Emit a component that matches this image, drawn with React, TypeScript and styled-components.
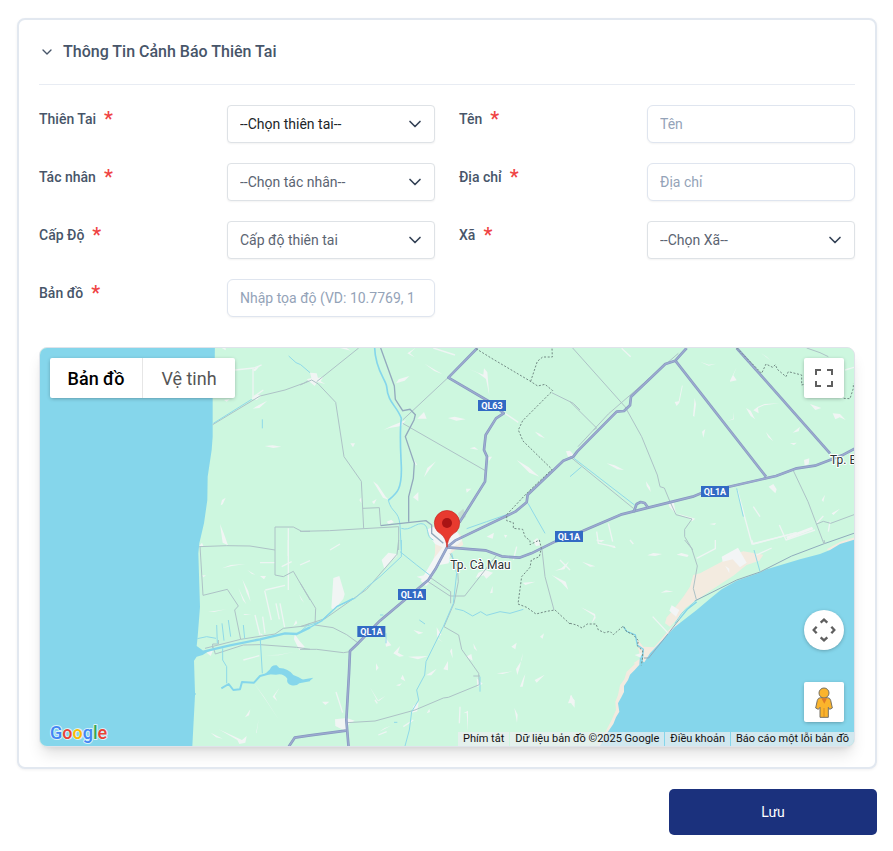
import React, { useState } from "react";
import styled, { createGlobalStyle } from "styled-components";
import { ChevronDown } from "lucide-react";

const GlobalStyle = createGlobalStyle`
  *, *::before, *::after { box-sizing: border-box; }
  body {
    margin: 0;
    background: #ffffff;
    color: #475569;
    font-family: Roboto, "Liberation Sans", sans-serif;
    font-size: 14px;
    line-height: 20px;
  }
  button, input, select { font: inherit; }
`;

const Page = styled.form`
  display: flex;
  flex-direction: column;
  gap: 20px;
  padding: 18px 16px 16px 17px;
`;

const Card = styled.section`
  padding: 0 20px 20px;
  border: 2px solid #e2e8f0;
  border-radius: 8px;
  background: #ffffff;
  box-shadow: 0 1px 3px rgba(15, 23, 42, 0.06);
`;

const CardHeader = styled.button`
  display: flex;
  align-items: center;
  gap: 8px;
  width: 100%;
  height: 65px;
  padding: 0;
  border: 0;
  border-bottom: 1px solid #e8ecf3;
  background: none;
  color: #475569;
  font-size: 16px;
  font-weight: 500;
  text-align: left;
  cursor: pointer;
`;

const Fields = styled.div`
  display: grid;
  grid-template-columns: 1fr 1fr;
  gap: 20px 24px;
  margin: 20px 0 30px;
`;

const Field = styled.div`
  display: grid;
  grid-template-columns: 47fr 52fr;
  align-items: start;
`;

const Label = styled.label`
  display: flex;
  align-items: center;
  gap: 8px;
  height: 28px;
  font-weight: 500;
`;

const Required = styled.span`
  color: #ef4444;
  font-size: 20px;
`;

const Input = styled.input`
  width: 100%;
  min-width: 0;
  height: 38px;
  padding: 0 20px 0 12px;
  border: 1px solid #dfe5ef;
  border-radius: 6px;
  background: #ffffff;
  color: #1e293b;
  box-shadow: 0 1px 2px rgba(0, 0, 0, 0.05);
  &::placeholder { color: #94a3b8; opacity: 1; }
`;

const SelectBox = styled.div`
  position: relative;
  min-width: 0;
  svg {
    position: absolute;
    top: 9px;
    right: 10px;
    color: #334155;
    pointer-events: none;
  }
`;

const Select = styled.select<{ $active?: boolean }>`
  appearance: none;
  width: 100%;
  height: 38px;
  padding: 0 36px 0 12px;
  border: 1px solid #dee2e6;
  border-radius: 4px;
  background: #ffffff;
  color: ${(p) => (p.$active ? "#212529" : "#5b6472")};
  box-shadow: 0 1px 2px rgba(0, 0, 0, 0.05);
`;

const MapFrame = styled.div`
  position: relative;
  height: 400px;
  overflow: hidden;
  border: 1px solid #dfe3ea;
  border-radius: 8px;
  background: #cdf7df;
  box-shadow: 0 10px 15px -3px rgba(0, 0, 0, 0.12), 0 4px 6px -4px rgba(0, 0, 0, 0.12);
`;

const MapDrawing = styled.svg`
  display: block;
  width: 100%;
  height: 100%;
  font-family: Roboto, sans-serif;
`;

const MapTypes = styled.div`
  position: absolute;
  top: 10px;
  left: 10px;
  display: flex;
  border-radius: 2px;
  background: #ffffff;
  box-shadow: 0 1px 4px -1px rgba(0, 0, 0, 0.4);
`;

const MapType = styled.button<{ $active?: boolean }>`
  height: 40px;
  min-width: ${(p) => (p.$active ? "92px" : "93px")};
  padding: 1px 16px 0;
  border: 0;
  border-left: ${(p) => (p.$active ? "0" : "1px solid #e6e6e6")};
  background: none;
  color: ${(p) => (p.$active ? "#000000" : "#565656")};
  font-size: 18px;
  font-weight: ${(p) => (p.$active ? 500 : 400)};
`;

const MapTop = styled.div`
  position: absolute;
  top: 10px;
  right: 10px;
`;

const MapTools = styled.div`
  position: absolute;
  right: 10px;
  bottom: 24px;
  display: flex;
  flex-direction: column;
  gap: 32px;
`;

const MapButton = styled.button<{ $round?: boolean }>`
  display: grid;
  place-items: center;
  width: 40px;
  height: 40px;
  padding: 0;
  border: 0;
  border-radius: ${(p) => (p.$round ? "50%" : "2px")};
  background: #ffffff;
  box-shadow: 0 1px 4px -1px rgba(0, 0, 0, 0.4);
`;

const LogoLink = styled.a`
  position: absolute;
  left: 8px;
  bottom: 0;
  height: 26px;
  svg { display: block; }
`;

const Attribution = styled.div`
  position: absolute;
  right: 0;
  bottom: 0;
  display: flex;
  gap: 1px;
  color: #111111;
  font-size: 11px;
  line-height: 14px;
`;

const Credit = styled.span`
  padding: 0 5px;
  background: rgba(235, 238, 240, 0.75);
  a, button {
    padding: 0;
    border: 0;
    background: none;
    color: inherit;
    text-decoration: none;
    line-height: 14px;
  }
`;

const Actions = styled.div`
  display: flex;
  justify-content: flex-end;
`;

const SaveButton = styled.button`
  min-width: 208px;
  height: 46px;
  border: 0;
  border-radius: 5px;
  background: #1b317d;
  color: #ffffff;
`;

type FieldSpec = {
  id: string;
  label: string;
  kind: "select" | "input";
  text: string;
  active?: boolean;
};

const fields: FieldSpec[] = [
  { id: "disaster", label: "Thiên Tai", kind: "select", text: "--Chọn thiên tai--", active: true },
  { id: "name", label: "Tên", kind: "input", text: "Tên" },
  { id: "agent", label: "Tác nhân", kind: "select", text: "--Chọn tác nhân--" },
  { id: "address", label: "Địa chỉ", kind: "input", text: "Địa chỉ" },
  { id: "level", label: "Cấp Độ", kind: "select", text: "Cấp độ thiên tai" },
  { id: "commune", label: "Xã", kind: "select", text: "--Chọn Xã--" },
  { id: "coords", label: "Bản đồ", kind: "input", text: "Nhập tọa độ (VD: 10.7769, 106.7009)" },
];

type Tile = {
  x: number;
  y: number;
  patches: string;
  streaks: string;
  minor: string;
  water: string;
  border?: string;
};

const tiles: Tile[] = [
  {
    x: 0,
    y: 0,
    patches:
      "M664 176l12-12 20 2-16 14zM572 496l4-16 11-7-9 20zM570 552l12 30 12 34-16-8zM704 318l24-2 26 4-24 4zM668 206l20-12 24-12-24 22zM508 618l8-10 4 10zM582 180l18-3-10 8zM668 90l27-18-20 22zM575 24h12v7z",
    streaks: "M615 90L672 84L695 75M669 85V178M775 565V750M672 170L700 150",
    minor: "M548 254L690 168L765 150L820 130L840 120M508 620L590 617L660 618L735 630V561H790L815 574H840",
    water: "M550 250L665 178M776 48L798 68L812 74L840 98M697 238V265",
  },
  {
    x: 810,
    y: 0,
    patches:
      "M20 118l14-4-4-16 20 2 4 14 16-4-8 14 14 8-24-6-8 12zM288 130l8-12 32-10-14 14zM352 236l20-20 8 20zM444 234l20-4 33 8-28 4zM250 270l24-12 44-18-14 18-36 6zM372 412l10-28 26-20-18 22zM151 310h14l-6 12zM219 424l14 10 24 36 10 10-18-7zM339 472l16-16v28zM216 485l14-8-8 16zM498 446h16l-14 12zM509 325l15-4 11 9zM560 350h16l-8 12zM552 85l10 12 6 70-10-50-24-18-28-12 44 17zM374 71l28 17 26 15-25-10zM650 360l36 22 32 28-30-12zM798 334l12-2 12 14-18 4zM705 275l14 6 16 14-18-7zM260 545l14-6 8 8-16 5zM560 590l22-12-4 18zM612 584l10 2-6 8zM120 24h20l12 8zM322 40l24-16-16 16 14 12zM178 480l6-8v18zM700 602l12-8 10 22-14 2z",
    streaks: "M615 220L655 247M60 0L130 15M400 24L465 45M90 630L120 612M340 360L350 375M484 600L470 615",
    minor:
      "M0 135L35 120L55 132L107 187L132 350L184 424L191 566M50 125L176 24M308 240L445 112M308 250L556 392M188 505L238 503L242 557M0 574L88 572L190 566L296 560V630M755 158L820 190L840 210M705 24V0",
    water:
      "M265 481C275 520 296 510 300 555L304 630M304 565C330 575 350 545 370 552C390 560 375 590 400 600M500 566L560 545L625 522M684 490L735 580",
    border:
      "M528 26L575 55L690 123L713 138L735 133L758 152L668 242L655 270L669 303L756 388L682 458L620 524V542L640 548V565L668 568L675 590L690 602L690 614L718 600M692 124L712 64L728 51H757L756 24",
  },
  {
    x: 1620,
    y: 0,
    patches:
      "M314 186l12-2 10-48 2 2-10 50-8 10zM374 174l4 18-5 38-4-2zM480 122l20-40-10 24 10 15-20 4zM574 40l16 10 12 12zM528 204l14 8 10 20 4 6-14-10zM566 220l-16-9 14-11 20-8 44-2-46 6-18 8zM668 278l22-18-4 14zM396 275l10-8-6 26zM720 192l34 12-18 6zM788 220l22 2 17 18-18-8-13 6zM588 276l10 12 12 16-15-12zM702 360l16-5-2 18-12 4zM596 440l14-8 10 16-4 12zM110 370l24 6 28 14-20-2zM228 424l12 18 2 14-12-18zM296 488l14-8 8 42-20-22zM318 520l58 16-10 8-8-8zM418 552l20-3-4 6zM648 590l78-30 4 8-78 30-18-36zM755 480l10-16-5 22zM470 244l20-8 2-20 0 22zM390 65l26 9 22-3-22 6zM660 310l20-2-8 7zM785 520l25-14-20 19z",
    streaks:
      "M502 450L546 612L680 578M80 575L85 610L135 620M115 550L128 605M628 555L648 600L735 570M550 500L570 530M155 25L182 50M825 90L852 82M740 550L760 528M780 545L775 575",
    minor:
      "M8 24L165 200L215 290L262 405L270 440L283 444L300 485L318 524L366 537L344 568V590L368 630M0 350L190 505M670 392L714 485L762 612M740 552L760 544L782 550L852 524M710 24L750 38L775 50M0 185L80 264L70 270M24 320L115 222L325 40",
    water: "M0 410L35 380M500 445L520 530M12 355L200 500",
    border:
      "M500 24L575 100L588 72L608 82L616 74L622 88L648 110L655 95L695 105V135L720 128L745 115L780 130L820 175L840 176L850 145V130",
  },
  {
    x: 0,
    y: 600,
    patches:
      "M576 85l26-10 44-3-40 6zM652 90l24 14-10-2zM690 108h18l-6 10zM516 106h12l-8 6zM625 143l24 50-10-12zM637 118l18 36 7 31-12-26zM808 164l14 24-9-10zM640 222h24l-20 3zM692 280l14 10-14-4zM794 282l14 20 16 18-16 10-16-32zM798 240l4 10-12 8zM728 470l20-26-14 24 8 16zM645 532l16-24-4 18zM566 568l70 32 14-12-4 20-18 4-6-12zM542 578l36 18-20-4zM678 580l8-42-6 40zM706 346l40-2 44-8-44 10zM530 338l20-8-8 18zM534 216l54-8-36 8zM672 430l30 40 45 70-40-60z",
    streaks: "M704 152L724 240M706 150L765 136M640 360L688 347M750 190L764 262M738 190L748 238M675 225L690 285M698 230L705 280M775 0V48M690 68H735M755 80L785 65M810 75L840 62",
    minor:
      "M510 18L519 166L592 148L625 198L614 210L632 298M735 30V105L760 110L790 94L840 180M525 325L632 298L735 282L760 265L825 258L840 250M550 322L556 342L640 315L690 314L800 322L840 328M548 325V312H565V300",
    water:
      "M560 255L562 310M576 250L582 302M595 240L602 290M502 296L530 290L558 295M578 325V360L590 380V430M640 255L644 295M691 300L697 400",
  },
  {
    x: 810,
    y: 600,
    patches:
      "M245 60l20-22 24 4 2 6-24 22-14 16zM100 114l18-6 16 54-4 14-28 34-8-6zM254 290l20 26-16 4zM340 270l30 8-14 5zM410 262l14 22-14 8 18 14-16-10zM280 340l20-22-6 20 18 10-14 2zM324 350l60-2-30 10zM228 370l8 14-8 8zM308 404l8 20-14-8zM378 406l32-20-16 20zM430 388l14-25v28zM456 325l2 30-8-22zM210 442l22 40 24-14-20 16zM288 436l18-6-8 8zM66 485h22l-12 10zM105 538l35-4 24 8-18 10-8 22-32-16zM340 498l16-12-4 28-16 4zM380 520l8-14 2 10zM530 415l18 16-16 10zM590 400l48-6-30 8zM652 405l-4-18 18-28 2-20-8 40zM660 440l10-26 6-12-8 38zM704 420l30-16-24 24zM720 290l12-10-4 16zM634 320l16-12-4 20zM804 490l10-26 10 24zM643 504l10 20-2 24zM490 520l14-8v64l-4-58zM498 350l16-8 4 20zM668 128l38-3-30 10zM765 92l20-8 22-20-14 24zM755 105l42 20 8 25-20-22zM520 310l12 24-10-9zM570 160l8-22 0 20zM238 575l35-18-20 8zM350 110l32-6-8 16zM535 98l20-8 24 8-20 18-8-10-24 8z",
    streaks: "M108 456L128 518M480 500L478 550M310 560L340 540M225 480L232 490M650 20L640 60M260 575L235 585M780 60L810 90",
    minor:
      "M296 0L291 43L200 148L75 236L0 260M0 128L47 205L45 255L99 263L140 284L176 310M0 328H50L130 338L150 335M390 112L452 155V190M380 122L450 168H494L588 48M450 40L472 80L475 125L462 190L432 260L476 285L485 328L536 400L538 434L445 472L430 474L345 510L225 543L142 548M725 20L735 110L762 210M520 408H540",
    water:
      "M304 0L304 50L240 110L200 142L165 175L110 200L60 245L20 258L0 276M300 35L350 75L395 110M455 40L470 100L460 190L430 260L378 365L374 405L350 450L356 480L335 515L328 570L315 618M465 206L490 212L518 228L542 215L560 226L600 215L630 220L670 208M358 240L375 252M240 225H250M258 280V310M282 547H292M540 410V455",
    border:
      "M718 0L724 25L718 50L694 60L690 82L665 110L654 192L680 202L708 222L740 214L765 210L810 252",
  },
  {
    x: 1620,
    y: 600,
    patches:
      "M232 46l18-7 26 3-20 6zM320 44l14-5 22 6-4 6zM272 158l16-7 22 4-20 2zM0 465l14 16 0 22-10-12zM33 202l42 20 2 12-12 16 8-22zM36 65l40 14-16 1zM115 18l24 4-6 2zM0 98l14 18zM86 0h18l-10 6zM194 345l20-6-2 14z",
    streaks: "M248 230L295 280M380 55L436 26V0M545 0L550 12L680 -22M80 0L95 5M180 0L190 12M560 45L605 24",
    minor: "M344 0L365 25L382 78L370 145L380 182M762 0L765 12",
    water: "M380 180L335 220L315 250M552 30L570 95",
    border:
      "M0 250L20 255L36 264L52 252H78L85 270L104 278L120 274L130 284L160 258L170 275L190 284L205 302L202 318L218 332V352L214 376",
  },
];

const highways = [
  "M1342 24L1255 113L1380 186L1421 220L1398 235L1367 285L1362 330L1371 350L1365 425L1288 548",
  "M1251 622L1275 602L1456 515L1490 487L1493 464L1600 362L1630 350L1642 334L1760 215L1782 213L1800 196L1803 170L1906 72L1936 62L1970 24",
  "M1251 622L1366 631L1415 649L1468 653L1504 640L1575 605L1658 573L1772 524L1858 502L1988 470L2015 459L2238 408L2300 385L2355 377L2400 360L2436 346L2474 326",
  "M1936 62L2208 410",
  "M2120 24L2400 340",
  "M1251 622L1216 688L1195 720L1050 842L982 912L960 933L957 1000L949 1140L956 1224",
  "M775 1222L794 1193L840 1186L948 1172",
  "M1811 516L1820 492L1832 486L1844 489L1855 504",
];

const shields = [
  { x: 1344, y: 180, text: "QL63" },
  { x: 2013, y: 438, text: "QL1A" },
  { x: 1575, y: 573, text: "QL1A" },
  { x: 1104, y: 747, text: "QL1A" },
  { x: 982, y: 858, text: "QL1A" },
];

function MapCanvas() {
  return (
    <MapDrawing viewBox="30 24 2442 1194" preserveAspectRatio="xMidYMid slice" role="img" aria-label="Bản đồ Cà Mau">
      <rect x="-1000" y="-1000" width="5000" height="4000" fill="#cdf7df" />
      <path
        fill="#85d6eb"
        d="M-1000 -100H556L554 80L548 150V290L545 330L533 410L532 480L522 550L508 610L505 640L510 800L503 890L500 918L522 934L545 928L518 945L500 950L492 962L495 1058L498 1062L495 1066L487 1218V1400H-1000Z"
      />
      <g transform="translate(1710 570)">
        <path
          fill="#f3ebe0"
          d="M280 135L300 130L365 95L385 78L430 64L490 74L478 92L440 105L400 137L365 160L300 203L285 213L255 235L235 265L210 290L195 280L200 262L215 245L250 200L270 170Z"
        />
        <path fill="#f3ebe0" d="M105 318L130 350L162 352L210 296L240 272V300L140 410L100 400L122 385Z" />
        <path fill="#f3ebe0" d="M770 20L720 36L680 58L700 70L770 40Z" />
        <path fill="#f3ebe0" d="M124 392L104 403L80 425L73 448L60 466L54 495L46 515L48 540L36 568L18 602L-10 650L-90 830H0L150 450Z" />
        <path
          fill="#85d6eb"
          d="M770 27L720 42L690 60L660 72L600 88L500 118L478 128L410 152L365 178L330 206L290 240L225 290L150 370L133 397L125 393L126 375L120 378L118 404L104 420L90 434L84 450L72 468V486L64 502L54 520L58 545L48 562L40 582L24 605L0 648L-90 830H1300V-20Z"
        />
        <path fill="#f3f5f6" d="M365 80L414 53L440 98L420 112L398 88L368 95ZM208 242L215 226L238 240L228 260ZM376 108L388 116V130Z" />
        <path fill="none" stroke="#8fabbc" strokeWidth="3" d="M132 384H146L210 304L240 265M284 213L410 150L480 126L575 78L670 42L770 7" />
        <path fill="none" stroke="#7fd3ea" strokeWidth="4" d="M70 290L80 304L106 315L112 345L130 358L126 395M240 265L262 238L290 216" />
      </g>
      <path fill="#f3ebe0" d="M1216 560L1262 565L1292 585L1300 615L1275 630L1240 660L1225 672L1205 680L1215 640Z" />
      <path fill="#f3f5f6" d="M1192 568L1225 555L1284 578L1292 600L1262 632L1256 670L1225 676L1198 728L1188 738L1172 722L1212 655L1238 622L1215 612L1200 590Z" />
      <path fill="#c5dfd2" d="M1284 520L1300 506L1308 530L1290 545Z" />

      {tiles.map((t) => (
        <g key={`${t.x}-${t.y}`} transform={`translate(${t.x} ${t.y})`} fill="none" strokeLinejoin="round">
          <path d={t.patches} fill="#f1f5f4" />
          <path d={t.streaks} stroke="#eef5f3" strokeWidth="4" />
          <path d={t.minor} stroke="#adc2c6" strokeWidth="3" />
          <path d={t.water} stroke="#8fd9e8" strokeWidth="3" />
        </g>
      ))}
      <g fill="none" stroke="#85d6eb" strokeLinejoin="round">
        <path strokeWidth="5" d="M1034 24C1036 90 1068 120 1070 140C1074 190 1100 196 1114 235C1108 280 1112 330 1114 380C1116 450 1100 460 1075 481" />
        <path strokeWidth="7" d="M520 935L600 916L690 898L765 880L800 882L840 862" />
        <path strokeWidth="4" d="M840 862L875 843L920 800L970 775" />
        <path strokeWidth="6" d="M574 1045L596 1032L610 1050L630 1048L636 1026L672 1028L690 1008L720 1000" />
      </g>
      <path fill="#85d6eb" d="M705 1002L720 988Q725 974 740 976L748 984Q775 985 790 1005L806 1012L820 1020L840 1016V1024L808 1030Q800 1039 784 1036Q768 1030 772 1016Q760 998 738 1004ZM810 1020L850 1013L838 1024L818 1026Z" />
      <path
        fill="none"
        stroke="#93a9bd"
        strokeWidth="4"
        d="M1052 24L1093 138L1096 178L1118 212L1140 208L1156 224L1152 240L1126 290L1153 370L1150 415L1136 470V545M1052 557L1188 542L1205 555V580L1240 610"
      />
      {highways.map((d) => (
        <g key={d} fill="none" strokeLinejoin="round">
          <path d={d} stroke="#8698c0" strokeWidth="8" />
          <path d={d} stroke="#9dabd0" strokeWidth="4" />
        </g>
      ))}
      {tiles.map((t) => (
        <path
          key={`b-${t.x}-${t.y}`}
          transform={`translate(${t.x} ${t.y})`}
          d={t.border}
          fill="none"
          stroke="#728a84"
          strokeWidth="3"
          strokeDasharray="6 5"
        />
      ))}
      {shields.map((s) => (
        <g key={`${s.x}-${s.y}`}>
          <rect x={s.x} y={s.y} width="84" height="33" fill="#326ac4" />
          <text x={s.x + 42} y={s.y + 26} textAnchor="middle" fill="#ffffff" fontSize="27" fontWeight="700">
            {s.text}
          </text>
        </g>
      ))}
      <g fill="#2b3335" stroke="#ffffff" strokeWidth="6" strokeLinejoin="round" paintOrder="stroke" fontSize="36">
        <text x="1261" y="688">Tp. Cà Mau</text>
        <text x="2400" y="372">Tp. Bạc Liêu</text>
      </g>
      <path
        d="M1251 622C1248 590 1236 585 1222 574A38 38 0 1 1 1280 574C1266 585 1254 590 1251 622Z"
        fill="#e83a2f"
        stroke="#c5221f"
        strokeWidth="2"
      />
      <circle cx="1251" cy="549" r="15" fill="#a91414" />
    </MapDrawing>
  );
}

function GoogleLogo() {
  return (
    <svg width="62" height="26" viewBox="0 0 62 26" aria-hidden="true">
      <text
        x="2"
        y="19"
        fontFamily="Roboto, sans-serif"
        fontSize="18"
        fontWeight="500"
        stroke="#d8f1f8"
        strokeWidth="2"
        strokeLinejoin="round"
        paintOrder="stroke"
      >
        <tspan fill="#4285f4">G</tspan>
        <tspan fill="#ea4335">o</tspan>
        <tspan fill="#fbbc04">o</tspan>
        <tspan fill="#4285f4">g</tspan>
        <tspan fill="#34a853">l</tspan>
        <tspan fill="#ea4335">e</tspan>
      </text>
    </svg>
  );
}

function FullscreenIcon() {
  return (
    <svg width="18" height="18" viewBox="0 0 18 18" fill="#5f5f5f" aria-hidden="true">
      <path d="M0 0v6h2V2h4V0zM12 0v2h4v4h2V0zM16 12v4h-4v2h6v-6zM2 12H0v6h6v-2H2z" />
    </svg>
  );
}

function CameraIcon() {
  return (
    <svg width="24" height="24" viewBox="0 0 72 72" fill="none" stroke="#5f5f5f" strokeWidth="7" aria-hidden="true">
      <path d="M26 14L36 5L46 14M26 58L36 67L46 58M14 26L5 36L14 46M58 26L67 36L58 46" />
    </svg>
  );
}

function PegmanIcon() {
  return (
    <svg width="18" height="31" viewBox="0 0 54 93" aria-hidden="true">
      <g fill="#fbb42c" stroke="#777165" strokeWidth="3" strokeLinejoin="round">
        <path d="M17 32H37Q45 32 47 40L52 63L44 67L40 61V91H15V61L10 67L2 63L7 40Q9 32 17 32Z" />
        <circle cx="27" cy="18" r="15" />
      </g>
      <path d="M19 34H36L28 50Z" fill="#e07b27" />
      <path d="M27 63V90" stroke="#d98e22" strokeWidth="3" />
    </svg>
  );
}

export default function App() {
  const [open, setOpen] = useState(true);
  return (
    <>
      <GlobalStyle />
      <Page onSubmit={(e) => e.preventDefault()}>
        <Card>
          <CardHeader type="button" aria-expanded={open} onClick={() => setOpen(!open)}>
            <ChevronDown size={16} />
            Thông Tin Cảnh Báo Thiên Tai
          </CardHeader>
          {open && (
            <>
              <Fields>
                {fields.map((f) => (
                  <Field key={f.id}>
                    <Label htmlFor={f.id}>
                      {f.label}
                      <Required>*</Required>
                    </Label>
                    {f.kind === "select" ? (
                      <SelectBox>
                        <Select id={f.id} $active={f.active}>
                          <option>{f.text}</option>
                        </Select>
                        <ChevronDown size={20} />
                      </SelectBox>
                    ) : (
                      <Input id={f.id} placeholder={f.text} />
                    )}
                  </Field>
                ))}
              </Fields>
              <MapFrame>
                <MapCanvas />
                <MapTypes>
                  <MapType type="button" $active>Bản đồ</MapType>
                  <MapType type="button">Vệ tinh</MapType>
                </MapTypes>
                <MapTop>
                  <MapButton type="button" aria-label="Toàn màn hình">
                    <FullscreenIcon />
                  </MapButton>
                </MapTop>
                <MapTools>
                  <MapButton type="button" $round aria-label="Điều khiển camera">
                    <CameraIcon />
                  </MapButton>
                  <MapButton type="button" aria-label="Chế độ xem phố">
                    <PegmanIcon />
                  </MapButton>
                </MapTools>
                <LogoLink href="#google" aria-label="Google">
                  <GoogleLogo />
                </LogoLink>
                <Attribution>
                  <Credit><button type="button">Phím tắt</button></Credit>
                  <Credit>Dữ liệu bản đồ ©2025 Google</Credit>
                  <Credit><a href="#terms">Điều khoản</a></Credit>
                  <Credit><a href="#report">Báo cáo một lỗi bản đồ</a></Credit>
                </Attribution>
              </MapFrame>
            </>
          )}
        </Card>
        <Actions>
          <SaveButton type="submit">Lưu</SaveButton>
        </Actions>
      </Page>
    </>
  );
}
